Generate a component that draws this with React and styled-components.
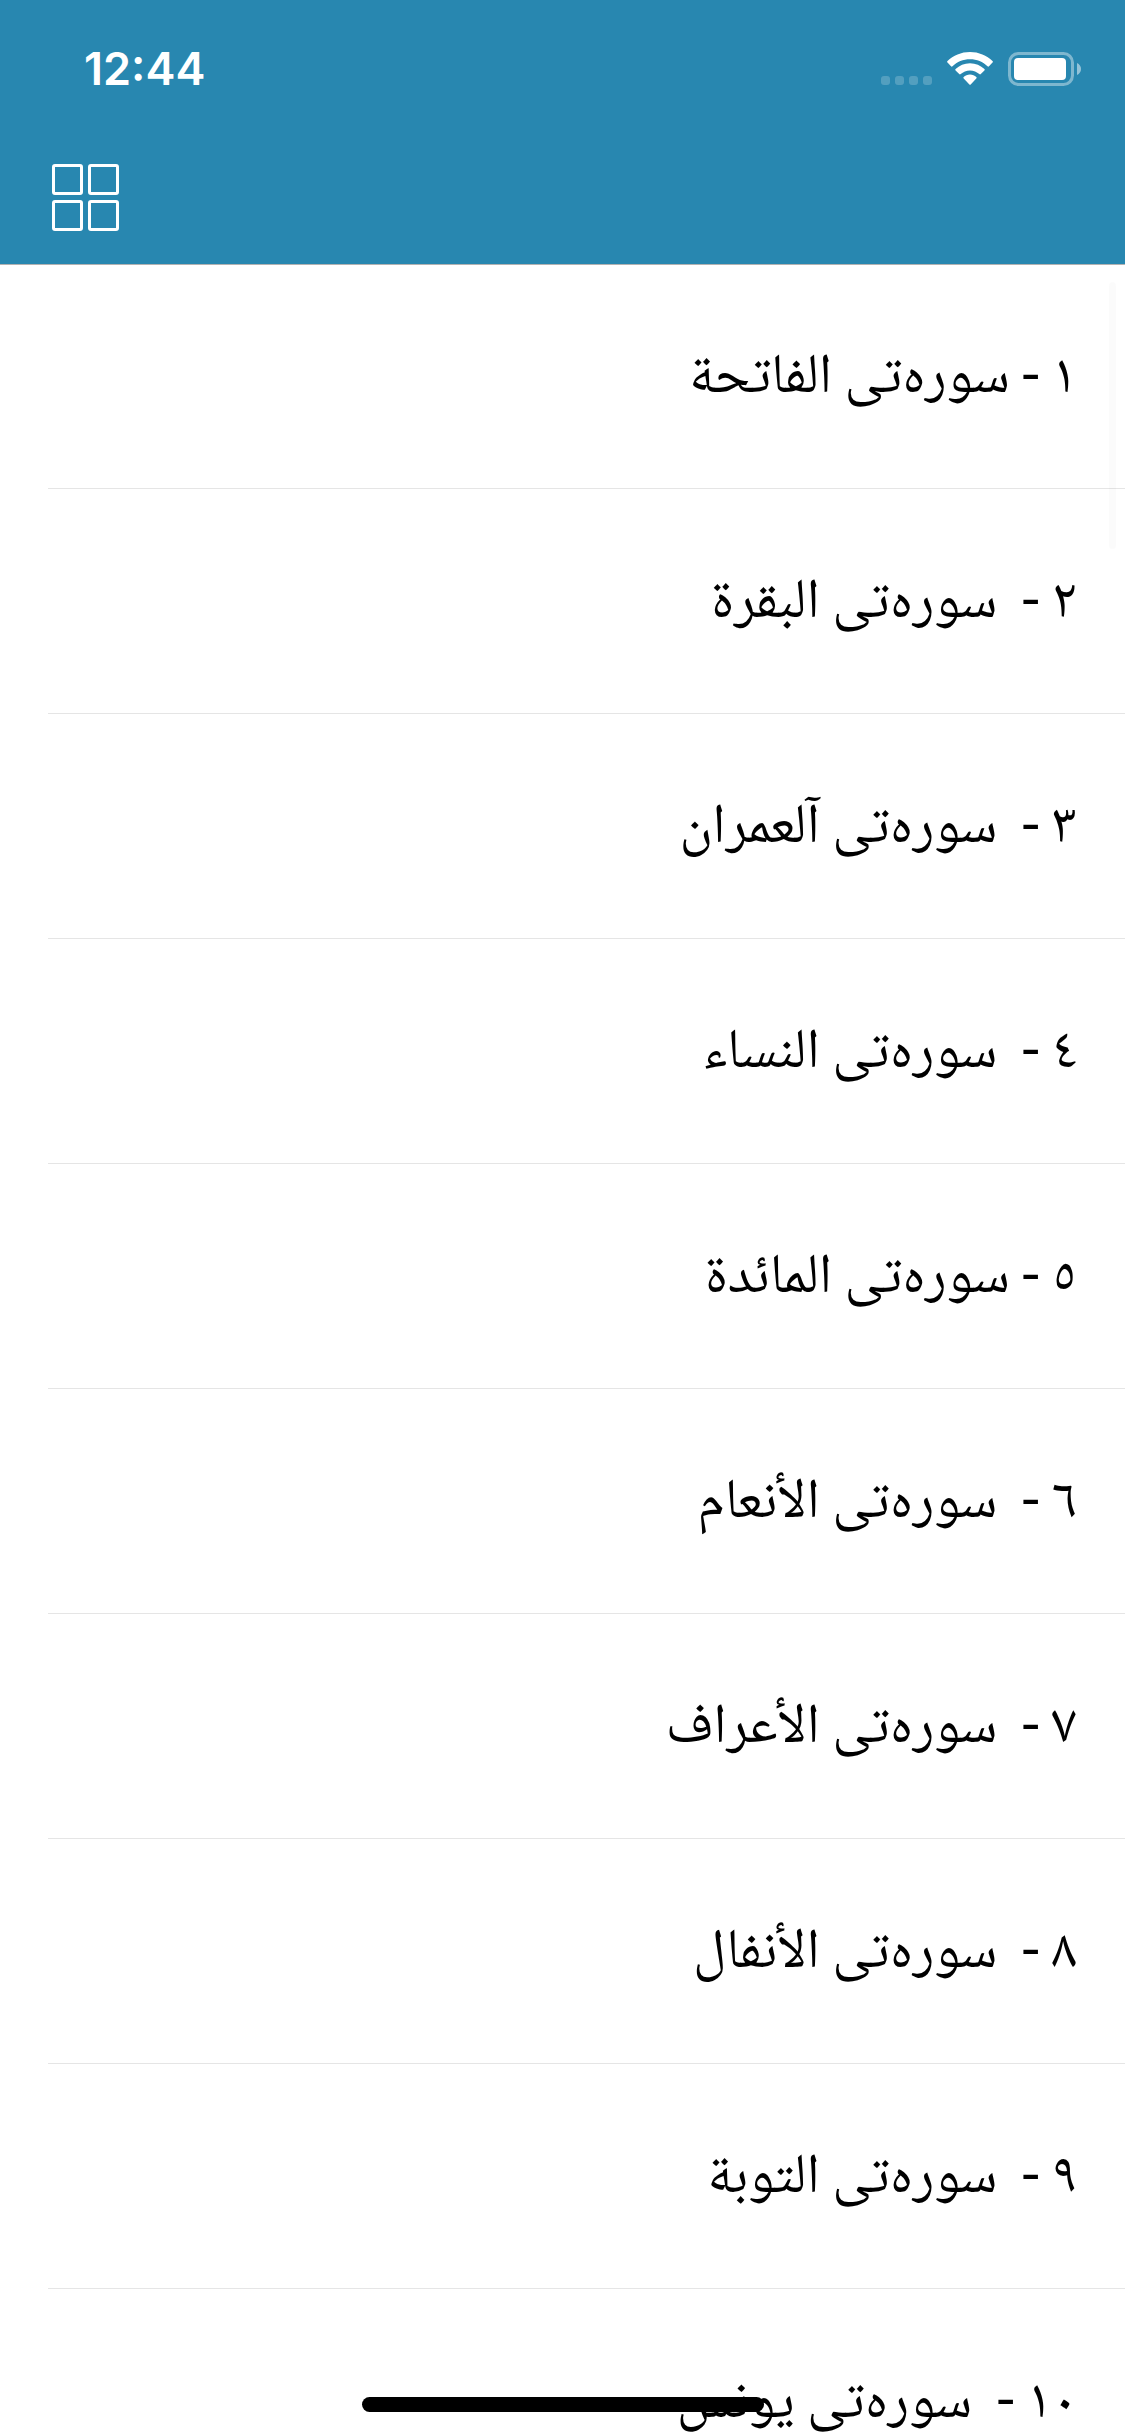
import React from 'react'
import styled, { createGlobalStyle } from 'styled-components'

const GlobalStyle = createGlobalStyle`
	* {
		box-sizing: border-box;
	}

	body {
		margin: 0;
		background-color: #fff;
	}
`

const Screen = styled.div`
	position: relative;
	height: 100vh;
	display: flex;
	flex-direction: column;
	overflow: hidden;
	background-color: #fff;
`

const Header = styled.header`
	flex: none;
	background-color: #2887b0;
	box-shadow: 0 1px 0 #b2b2b2;
	z-index: 1;
`

const StatusBar = styled.div`
	display: flex;
	align-items: center;
	justify-content: space-between;
	height: 132px;
	padding: 6px 44px 0 84px;
`

const Time = styled.time`
	color: #fff;
	font-family: Inter, 'Liberation Sans', sans-serif;
	font-size: 45px;
	font-weight: 600;
	line-height: 52px;
`

const StatusIcons = styled.div`
	display: flex;
	align-items: center;
	gap: 15px;
`

const NavBar = styled.nav`
	display: flex;
	align-items: center;
	height: 132px;
	padding: 0 52px 2px;
`

const MenuButton = styled.button`
	display: flex;
	padding: 0;
	border: none;
	background: none;
	cursor: pointer;
`

const List = styled.ul`
	flex: 1;
	min-height: 0;
	margin: 0;
	padding: 0;
	overflow-y: auto;
	list-style: none;
	scrollbar-width: none;
`

const Row = styled.li`
	margin-left: 48px;
	border-bottom: 1px solid #e5e5e5;
`

const SuraLink = styled.a`
	display: flex;
	align-items: center;
	height: 224px;
	padding: 8px 48px 0;
	color: #000;
	font-family: 'Noto Naskh Arabic', 'DejaVu Sans', sans-serif;
	font-size: 56px;
	line-height: 72px;
	text-decoration: none;
	white-space: pre;
`

const ScrollThumb = styled.div`
	position: absolute;
	top: 282px;
	right: 9px;
	width: 7px;
	height: 267px;
	border-radius: 4px;
	background-color: rgba(0, 0, 0, 0.015);
	z-index: 2;
`

const HomeIndicator = styled.div`
	position: absolute;
	bottom: 24px;
	left: 50%;
	width: 402px;
	height: 15px;
	border-radius: 8px;
	background-color: #000;
	transform: translateX(-50%);
`

const suras = [
	'١ - سورەتی الفاتحة',
	'٢ -  سورەتی البقرة',
	'٣ -  سورەتی آلعمران',
	'٤ -  سورەتی النساء',
	'٥ - سورەتی المائدة',
	'٦ -  سورەتی الأنعام',
	'٧ -  سورەتی الأعراف',
	'٨ -  سورەتی الأنفال',
	'٩ -  سورەتی التوبة',
	'١٠ -  سورەتی یونس',
]

const SignalIcon = () => (
	<svg width="51" height="34" viewBox="0 0 51 34" fill="#fff" fillOpacity="0.2">
		<rect x="0" y="24" width="9" height="9" rx="3" />
		<rect x="14" y="24" width="9" height="9" rx="3" />
		<rect x="28" y="24" width="9" height="9" rx="3" />
		<rect x="42" y="24" width="9" height="9" rx="3" />
	</svg>
)

const WifiIcon = () => (
	<svg width="46" height="34" viewBox="0 0 46 34" fill="#fff">
		<path d="M23 0C14.200 0 6.200 3.400 0.500 9.100a1 1 0 0 0 0 1.500l3.500 3.600a1 1 0 0 0 1.500 0C10 9.800 16.200 7.200 23 7.200s13 2.600 17.500 7a1 1 0 0 0 1.500 0l3.500-3.600a1 1 0 0 0 0-1.500C39.800 3.400 31.800 0 23 0z" />
		<path d="M23 11.200c-5.600 0-10.700 2.200-14.400 5.800a1 1 0 0 0 0 1.500l3.600 3.600a1 1 0 0 0 1.500 0c2.400-2.300 5.700-3.700 9.300-3.700s6.900 1.400 9.300 3.700a1 1 0 0 0 1.500 0l3.600-3.600a1 1 0 0 0 0-1.500C33.700 13.400 28.600 11.200 23 11.200z" />
		<path d="M23 22.500c-2.500 0-4.700 1-6.300 2.500a0.900 0.900 0 0 0 0 1.400l5.700 6.100a0.900 0.900 0 0 0 1.300 0l5.600-6.100a0.900 0.900 0 0 0 0-1.400C27.700 23.500 25.500 22.500 23 22.500z" />
	</svg>
)

const BatteryIcon = () => (
	<svg width="73" height="34" viewBox="0 0 73 34" fill="#fff">
		<rect
			x="1.500"
			y="1.500"
			width="63"
			height="31"
			rx="9"
			fill="none"
			stroke="#fff"
			strokeOpacity="0.4"
			strokeWidth="3"
		/>
		<rect x="6" y="6" width="52" height="22" rx="4" />
		<path d="M69 11c2.500 1 4 3.400 4 6s-1.500 5-4 6z" fillOpacity="0.5" />
	</svg>
)

const GridIcon = () => (
	<svg width="67" height="67" viewBox="0 0 67 67" fill="none" stroke="#fff" strokeWidth="3">
		<rect x="1.500" y="1.500" width="28" height="28" rx="1.500" />
		<rect x="37.500" y="1.500" width="28" height="28" rx="1.500" />
		<rect x="1.500" y="37.500" width="28" height="28" rx="1.500" />
		<rect x="37.500" y="37.500" width="28" height="28" rx="1.500" />
	</svg>
)

const App = () => {
	return (
		<Screen>
			<GlobalStyle />
			<Header>
				<StatusBar>
					<Time>12:44</Time>
					<StatusIcons>
						<SignalIcon />
						<WifiIcon />
						<BatteryIcon />
					</StatusIcons>
				</StatusBar>
				<NavBar>
					<MenuButton type="button" aria-label="Menu">
						<GridIcon />
					</MenuButton>
				</NavBar>
			</Header>
			<List>
				{suras.map((name, index) => (
					<Row key={name}>
						<SuraLink href={`#sura-${index + 1}`} dir="rtl" lang="ckb">
							{name}
						</SuraLink>
					</Row>
				))}
			</List>
			<ScrollThumb />
			<HomeIndicator />
		</Screen>
	)
}

export default App
